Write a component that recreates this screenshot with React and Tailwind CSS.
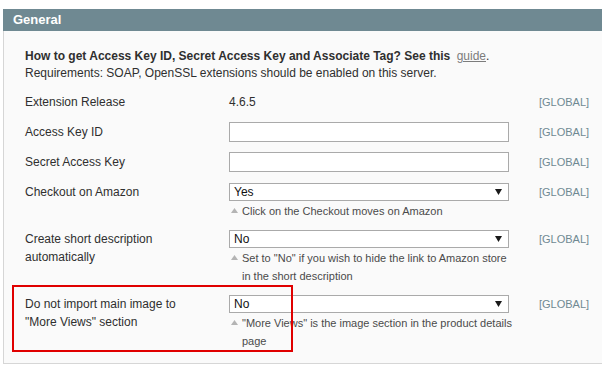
import React from 'react';

const Arrow = () => (
  <svg width="7" height="6" viewBox="0 0 7 6" className="shrink-0">
    <polygon points="0,0 7,0 3.5,6" fill="#1a1a1a" />
  </svg>
);

function Hint({ children }) {
  return (
    <div className="mt-px flex items-start text-[11px] leading-[18px] text-[#4a4a4a]">
      <svg width="7" height="5" viewBox="0 0 7 5" className="ml-[2px] mr-[4px] mt-[6px] shrink-0">
        <polygon points="3.5,0 7,5 0,5" fill="#b4b4b4" />
      </svg>
      <span className="w-[271px] shrink-0">{children}</span>
    </div>
  );
}

function Select({ value }) {
  return (
    <div className="flex h-[18px] w-[280px] items-center justify-between border border-[#aaaaaa] bg-white pl-[4px] pr-[6px] text-[12px] text-[#111]">
      <span>{value}</span>
      <Arrow />
    </div>
  );
}

function Row({ label, leading = 'leading-[18px]', className = '', children, overlay }) {
  return (
    <div className={`relative grid grid-cols-[204px_280px_1fr] ${className}`}>
      <div className={`w-[175px] ${leading}`}>{label}</div>
      <div>{children}</div>
      <div className={`pl-[30px] text-[11px] text-[#6f8992] ${leading}`}>[GLOBAL]</div>
      {overlay}
    </div>
  );
}

export default function App() {
  return (
    <div className="h-[367px] w-[602px] overflow-hidden bg-white font-['Liberation_Sans',Arial,sans-serif] text-[12px] text-[#2f2f2f]">
      <div className="ml-[3px] mt-[9px]">
        {/* Section head */}
        <div className="h-[22px] bg-[#6f8992] pl-[10px] text-[13px] font-bold leading-[22px] text-white">
          General
        </div>

        {/* Fieldset */}
        <div className="border-b border-l border-[#d6d6d6] bg-[#fafafa] pb-[13px] pl-[21px] pt-[17px]">
          <div className="leading-[17px]">
            <div>
              <span className="font-bold">
                How to get Access Key ID, Secret Access Key and Associate Tag? See this
              </span>{' '}
              <a className="ml-[3px] text-[#7c7c7c] underline">guide</a>.
            </div>
            <div>Requirements: SOAP, OpenSSL extensions should be enabled on this server.</div>
          </div>

          <div className="mt-[11px]">
            <Row label="Extension Release" leading="leading-[19px]" className="mb-[10px]">
              <div className="leading-[19px]">4.6.5</div>
            </Row>

            <Row label="Access Key ID" leading="leading-[20px]" className="mb-[10px]">
              <div className="h-[20px] w-[280px] border border-[#aaaaaa] bg-white" />
            </Row>

            <Row label="Secret Access Key" leading="leading-[20px]" className="mb-[11px]">
              <div className="h-[20px] w-[280px] border border-[#aaaaaa] bg-white" />
            </Row>

            <Row label="Checkout on Amazon" className="mb-[10px]">
              <Select value="Yes" />
              <Hint>Click on the Checkout moves on Amazon</Hint>
            </Row>

            <Row label="Create short description automatically" className="mb-[10px]">
              <Select value="No" />
              <Hint>Set to "No" if you wish to hide the link to Amazon store in the short description</Hint>
            </Row>

            <Row
              label={'Do not import main image to "More Views" section'}
              overlay={
                <div className="pointer-events-none absolute left-[-13px] top-[-10px] h-[67px] w-[281px] border-2 border-[#e00000]" />
              }
            >
              <Select value="No" />
              <Hint>"More Views" is the image section in the product details page</Hint>
            </Row>
          </div>
        </div>
      </div>
    </div>
  );
}
